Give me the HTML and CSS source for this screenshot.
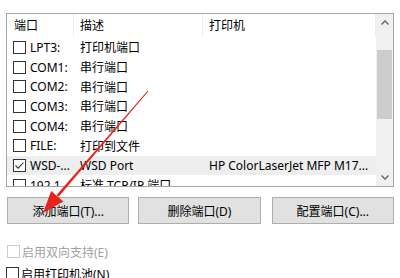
FILE: index.html
```html
<!DOCTYPE html>
<html lang="zh">
<head>
<meta charset="utf-8">
<link rel="stylesheet" href="styles.css">
</head>
<body>
<div class="page">
  <div class="listbox">
    <div class="main">
      <div class="header">
        <div class="hcell c1">端口</div>
        <div class="hcell c2">描述</div>
        <div class="hcell c3">打印机</div>
      </div>
      <div class="rows">
        <div class="row"><div class="cell port"><span class="cb"></span>LPT3:</div><div class="cell">打印机端口</div><div class="cell"></div></div>
        <div class="row"><div class="cell port"><span class="cb"></span>COM1:</div><div class="cell">串行端口</div><div class="cell"></div></div>
        <div class="row"><div class="cell port"><span class="cb"></span>COM2:</div><div class="cell">串行端口</div><div class="cell"></div></div>
        <div class="row"><div class="cell port"><span class="cb"></span>COM3:</div><div class="cell">串行端口</div><div class="cell"></div></div>
        <div class="row"><div class="cell port"><span class="cb"></span>COM4:</div><div class="cell">串行端口</div><div class="cell"></div></div>
        <div class="row"><div class="cell port"><span class="cb"></span>FILE:</div><div class="cell">打印到文件</div><div class="cell"></div></div>
        <div class="row sel"><div class="cell port"><span class="cb checked"><svg viewBox="0 0 13 13" width="13" height="13"><path d="M2.5 6.5 L5.2 9.2 L10.5 3.5" fill="none" stroke="#333" stroke-width="1.1"/></svg></span>WSD-...</div><div class="cell">WSD Port</div><div class="cell">HP ColorLaserJet MFP M17...</div></div>
        <div class="row"><div class="cell port"><span class="cb"></span>192.1...</div><div class="cell">标准 TCP/IP 端口</div><div class="cell"></div></div>
      </div>
    </div>
    <div class="scrollbar">
      <div class="arrow"><svg viewBox="0 0 8 5" width="8" height="5"><path d="M0.5 4.5 L4 1 L7.5 4.5" fill="none" stroke="#606060" stroke-width="1.3"/></svg></div>
      <div class="track"><div class="thumb"></div></div>
      <div class="arrow"><svg viewBox="0 0 8 5" width="8" height="5"><path d="M0.5 0.5 L4 4 L7.5 0.5" fill="none" stroke="#606060" stroke-width="1.3"/></svg></div>
    </div>
  </div>
  <div class="buttons">
    <button class="btn">添加端口(T)...</button>
    <button class="btn">删除端口(D)</button>
    <button class="btn">配置端口(C)...</button>
  </div>
  <div class="opts">
    <label class="opt disabled"><span class="cb"></span>启用双向支持(E)</label>
    <label class="opt"><span class="cb"></span>启用打印机池(N)</label>
  </div>
  <svg class="annot" width="400" height="278" viewBox="0 0 400 278">
    <polygon points="148.4,91.3 147.6,90.7 56.6,195.0 58.6,196.8" fill="#e8231c"/>
    <polygon points="43,213 51.2,191.1 63.4,201.5" fill="#e8231c"/>
  </svg>
</div>
</body>
</html>
```
FILE: styles.css
```css
* { box-sizing: border-box; }
html, body { margin: 0; padding: 0; background: #fff; }
body {
  font-family: "Noto Sans", "Noto Sans CJK SC", sans-serif;
  font-size: 12px;
  color: #000;
  width: 400px;
  height: 278px;
  overflow: hidden;
}
.page {
  position: relative;
  padding: 13px 6px 0 6px;
  display: flex;
  flex-direction: column;
}
.listbox {
  width: 388px;
  height: 174px;
  border: 1px solid #a6a6a6;
  display: flex;
}
.main { flex: 1; min-width: 0; display: flex; flex-direction: column; }
.header {
  display: flex;
  height: 22px;
  flex: none;
}
.hcell {
  display: flex;
  align-items: center;
  padding-left: 7px;
  border-right: 1px solid #ececec;
  height: 22px;
}
.hcell.c1 { width: 67px; }
.hcell.c2 { width: 129px; padding-left: 6px; }
.hcell.c3 { flex: 1; padding-left: 6px; }
.rows { overflow: hidden; flex: 1; padding-top: 1.5px; }
.row {
  display: grid;
  grid-template-columns: 67px 129px 1fr;
  height: 19.7px;
  align-items: center;
  white-space: nowrap;
}
.row.sel { background: #eeeeee; }
.cell { padding-left: 6px; display: flex; align-items: center; overflow: hidden; }
.cell.port { padding-left: 6px; gap: 4px; }
.cb {
  display: inline-block;
  width: 13px;
  height: 13px;
  border: 1px solid #333;
  background: #fff;
  flex: none;
  position: relative;
}
.cb svg { position: absolute; left: -1px; top: -1px; }
.scrollbar {
  width: 17px;
  background: #f0f0f0;
  display: flex;
  flex-direction: column;
  flex: none;
}
.arrow {
  height: 17px;
  display: flex;
  align-items: center;
  justify-content: center;
  flex: none;
}
.track { flex: 1; padding: 19px 1px 0 1px; }
.thumb { height: 69px; background: #cdcdcd; }
.buttons {
  display: flex;
  gap: 9px;
  margin-top: 10px;
  padding-left: 1px;
}
.btn {
  width: 123px;
  height: 27px;
  background: #e1e1e1;
  border: 1px solid #adadad;
  font: inherit;
  color: #000;
  padding: 0;
}
.btn:nth-child(3) { margin-left: 2px; }
.opts {
  display: flex;
  flex-direction: column;
  gap: 9px;
  margin-top: 21px;
}
.opt { display: flex; align-items: center; gap: 2px; height: 13px; }
.opt.disabled { color: #a0a0a0; padding-left: 1px; }
.opt.disabled .cb { border-color: #cccccc; }
.annot { position: absolute; left: 0; top: 0; pointer-events: none; }
```
